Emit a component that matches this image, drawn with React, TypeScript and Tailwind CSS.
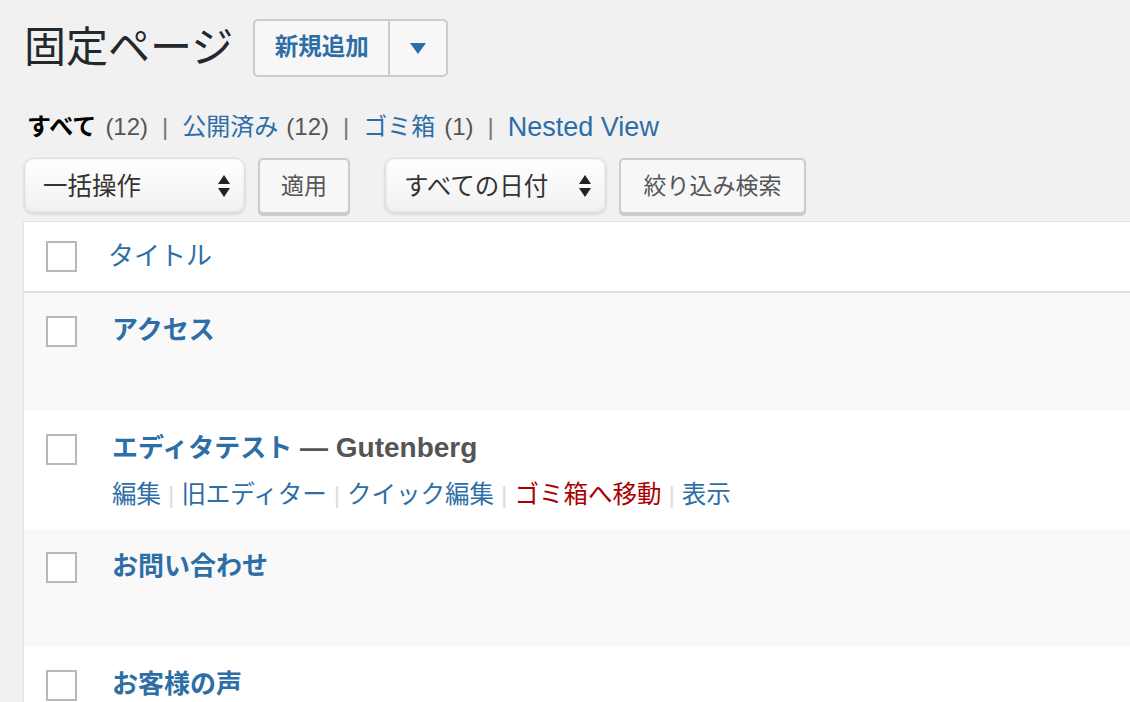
import React from "react";

const FONT = '"Liberation Sans", "Noto Sans CJK JP", sans-serif';

function Checkbox() {
  return <div className="w-[31px] h-[31px] border-2 border-[#b4b9be] bg-white shrink-0" />;
}

function SelectBox({ label, width }: { label: string; width: string }) {
  return (
    <div
      className={`${width} h-[55px] rounded-[9px] border border-[#ddd] bg-gradient-to-b from-white to-[#f1f1f1] shadow-[0_1px_3px_rgba(0,0,0,0.15),inset_0_0_4px_rgba(0,0,0,0.06)] flex items-center justify-between pl-[18px] pr-[13px] text-[24.5px] text-[#333]`}
    >
      <span className="pt-[3px]">{label}</span>
      <svg width="14" height="26" viewBox="0 0 14 26">
        <path d="M7 2 L13 11 L1 11 Z" fill="#222" />
        <path d="M1 15 L13 15 L7 24 Z" fill="#222" />
      </svg>
    </div>
  );
}

function GrayButton({ label, width }: { label: string; width: string }) {
  return (
    <div
      className={`${width} h-[56px] rounded-[5px] border-2 border-[#ccc] bg-[#f7f7f7] shadow-[0_2px_0_#ccc] flex items-center justify-center text-[23px] text-[#555]`}
    >
      {label}
    </div>
  );
}

type Row = { title: string; suffix?: string; actions?: boolean; alt: boolean };

const rows: Row[] = [
  { title: "アクセス", alt: true },
  { title: "エディタテスト", suffix: " — Gutenberg", actions: true, alt: false },
  { title: "お問い合わせ", alt: true },
  { title: "お客様の声", alt: false },
];

export default function App() {
  return (
    <div className="h-[702px] bg-[#f1f1f1] pl-[23px] overflow-hidden" style={{ fontFamily: FONT }}>
      {/* heading */}
      <div className="flex items-center pt-[19px] h-[77px]">
        <h1 className="text-[42px] text-[#23282d] leading-none ml-[1px] mr-[20px]">固定ページ</h1>
        <div className="flex">
          <div className="w-[137px] h-[58px] border-2 border-[#ccc] rounded-l-[5px] bg-[#f7f7f7] flex items-center justify-center text-[23.5px] font-bold text-[#2e6ea6]">
            新規追加
          </div>
          <div className="w-[58px] h-[58px] border-2 border-l-0 border-[#ccc] rounded-r-[5px] bg-[#f7f7f7] flex items-center justify-center">
            <svg width="18" height="13" viewBox="0 0 18 13">
              <path d="M1 1 L17 1 L9 12 Z" fill="#2e6ea6" />
            </svg>
          </div>
        </div>
      </div>

      {/* status links */}
      <div className="flex items-center h-[26px] mt-[37px] ml-[4px] text-[24px] text-[#555]">
        <span className="font-bold text-black">すべて</span>
        <span className="ml-[9px]">(12)</span>
        <span className="mx-[14px] text-[#777]">|</span>
        <span className="text-[#2e6ea6]">公開済み</span>
        <span className="ml-[8px]">(12)</span>
        <span className="mx-[14px] text-[#777]">|</span>
        <span className="text-[#2e6ea6]">ゴミ箱</span>
        <span className="ml-[9px]">(1)</span>
        <span className="mx-[14px] text-[#777]">|</span>
        <span className="text-[#2e6ea6] text-[27px]">Nested View</span>
      </div>

      {/* filters */}
      <div className="flex items-start mt-[18px] ml-[1px]">
        <SelectBox label="一括操作" width="w-[221px]" />
        <div className="ml-[13px]">
          <GrayButton label="適用" width="w-[92px]" />
        </div>
        <div className="ml-[35px]">
          <SelectBox label="すべての日付" width="w-[221px]" />
        </div>
        <div className="ml-[13px]">
          <GrayButton label="絞り込み検索" width="w-[187px]" />
        </div>
      </div>

      {/* table */}
      <div className="mt-[7px] border-l border-t border-[#e5e5e5] bg-white">
        <div className="h-[71px] flex items-center border-b-2 border-[#e1e1e1] pl-[22px]">
          <Checkbox />
          <span className="ml-[31px] text-[26px] text-[#2e6ea6]">タイトル</span>
        </div>
        {rows.map((r) => (
          <div
            key={r.title}
            className={`h-[118px] flex items-start pl-[22px] pt-[23px] ${r.alt ? "bg-[#f9f9f9]" : "bg-white"}`}
          >
            <Checkbox />
            <div className="ml-[35px] -mt-[4px]">
              <div className="text-[26px] font-bold text-[#2e6ea6] leading-[36px] whitespace-nowrap">
                {r.title}
                {r.suffix && <span className="text-[#555] text-[28px]">{r.suffix}</span>}
              </div>
              {r.actions && (
                <div className="mt-[14px] flex items-center text-[24.5px] text-[#2e6ea6] leading-[30px] whitespace-nowrap">
                  <span>編集</span>
                  <span className="mx-[7px] text-[#ddd]">|</span>
                  <span>旧エディター</span>
                  <span className="mx-[7px] text-[#ddd]">|</span>
                  <span>クイック編集</span>
                  <span className="mx-[7px] text-[#ddd]">|</span>
                  <span className="text-[#a00]">ゴミ箱へ移動</span>
                  <span className="mx-[7px] text-[#ddd]">|</span>
                  <span>表示</span>
                </div>
              )}
            </div>
          </div>
        ))}
      </div>
    </div>
  );
}
